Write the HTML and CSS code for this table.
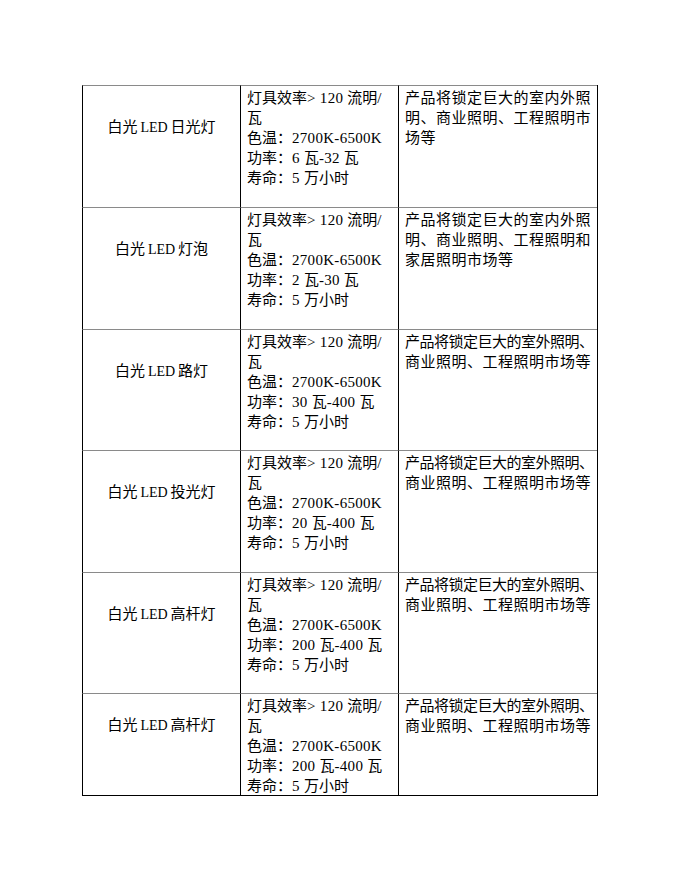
FILE: index.html
```html
<!DOCTYPE html>
<html lang="zh-CN">
<head>
<meta charset="utf-8">
<title>白光LED产品</title>
<link rel="stylesheet" href="styles.css">
</head>
<body>
<div class="spec-table">
  <div class="cell name"><span>白光<span class="lat">LED</span>日光灯</span></div>
  <div class="cell spec">
    <div class="ln">灯具效率<span class="lat">&gt; 120 </span>流明<span class="lat">/</span></div>
    <div class="ln">瓦</div>
    <div class="ln">色温：<span class="lat">2700K-6500K</span></div>
    <div class="ln">功率：<span class="lat">6 </span>瓦<span class="lat">-32 </span>瓦</div>
    <div class="ln">寿命：<span class="lat">5 </span>万小时</div>
  </div>
  <div class="cell market">
    <div class="ln">产品将锁定巨大的室内外照</div>
    <div class="ln">明、商业照明、工程照明市</div>
    <div class="ln">场等</div>
  </div>

  <div class="cell name"><span>白光<span class="lat">LED</span>灯泡</span></div>
  <div class="cell spec">
    <div class="ln">灯具效率<span class="lat">&gt; 120 </span>流明<span class="lat">/</span></div>
    <div class="ln">瓦</div>
    <div class="ln">色温：<span class="lat">2700K-6500K</span></div>
    <div class="ln">功率：<span class="lat">2 </span>瓦<span class="lat">-30 </span>瓦</div>
    <div class="ln">寿命：<span class="lat">5 </span>万小时</div>
  </div>
  <div class="cell market">
    <div class="ln">产品将锁定巨大的室内外照</div>
    <div class="ln">明、商业照明、工程照明和</div>
    <div class="ln">家居照明市场等</div>
  </div>

  <div class="cell name"><span>白光<span class="lat">LED</span>路灯</span></div>
  <div class="cell spec">
    <div class="ln">灯具效率<span class="lat">&gt; 120 </span>流明<span class="lat">/</span></div>
    <div class="ln">瓦</div>
    <div class="ln">色温：<span class="lat">2700K-6500K</span></div>
    <div class="ln">功率：<span class="lat">30 </span>瓦<span class="lat">-400 </span>瓦</div>
    <div class="ln">寿命：<span class="lat">5 </span>万小时</div>
  </div>
  <div class="cell market">
    <div class="ln tight">产品将锁定巨大的室外照明、</div>
    <div class="ln">商业照明、工程照明市场等</div>
  </div>

  <div class="cell name"><span>白光<span class="lat">LED</span>投光灯</span></div>
  <div class="cell spec">
    <div class="ln">灯具效率<span class="lat">&gt; 120 </span>流明<span class="lat">/</span></div>
    <div class="ln">瓦</div>
    <div class="ln">色温：<span class="lat">2700K-6500K</span></div>
    <div class="ln">功率：<span class="lat">20 </span>瓦<span class="lat">-400 </span>瓦</div>
    <div class="ln">寿命：<span class="lat">5 </span>万小时</div>
  </div>
  <div class="cell market">
    <div class="ln tight">产品将锁定巨大的室外照明、</div>
    <div class="ln">商业照明、工程照明市场等</div>
  </div>

  <div class="cell name"><span>白光<span class="lat">LED</span>高杆灯</span></div>
  <div class="cell spec">
    <div class="ln">灯具效率<span class="lat">&gt; 120 </span>流明<span class="lat">/</span></div>
    <div class="ln">瓦</div>
    <div class="ln">色温：<span class="lat">2700K-6500K</span></div>
    <div class="ln">功率：<span class="lat">200 </span>瓦<span class="lat">-400 </span>瓦</div>
    <div class="ln">寿命：<span class="lat">5 </span>万小时</div>
  </div>
  <div class="cell market">
    <div class="ln tight">产品将锁定巨大的室外照明、</div>
    <div class="ln">商业照明、工程照明市场等</div>
  </div>

  <div class="cell name"><span>白光<span class="lat">LED</span>高杆灯</span></div>
  <div class="cell spec">
    <div class="ln">灯具效率<span class="lat">&gt; 120 </span>流明<span class="lat">/</span></div>
    <div class="ln">瓦</div>
    <div class="ln">色温：<span class="lat">2700K-6500K</span></div>
    <div class="ln">功率：<span class="lat">200 </span>瓦<span class="lat">-400 </span>瓦</div>
    <div class="ln">寿命：<span class="lat">5 </span>万小时</div>
  </div>
  <div class="cell market">
    <div class="ln tight">产品将锁定巨大的室外照明、</div>
    <div class="ln">商业照明、工程照明市场等</div>
  </div>
</div>
</body>
</html>
```

FILE: styles.css
```css
html, body {
  margin: 0;
  padding: 0;
  background: #fff;
}

body {
  font-family: "Noto Sans CJK SC", "Liberation Serif", sans-serif;
  font-size: 15px;
  line-height: 20px;
  color: #000;
}

.spec-table {
  display: grid;
  grid-template-columns: 158px 158px 199px;
  grid-template-rows: 122px 122px 121px 122px 121px auto;
  width: max-content;
  margin: 85px 0 0 82px;
  border-right: 1px solid #000;
  border-bottom: 1px solid #000;
}

.cell {
  box-sizing: border-box;
  border-left: 1px solid #000;
  border-top: 1px solid #8a8a8a;
  padding: 1px 0 0 6px;
  white-space: nowrap;
}

.ln {
  height: 20px;
  line-height: 20px;
}

.name {
  display: flex;
  align-items: center;
  justify-content: center;
  padding: 1px 0 42px 0;
  line-height: 20px;
}

.lat {
  font-family: "Liberation Serif", serif;
  line-height: 1;
}

.name .lat {
  margin: 0 3px;
  font-size: 14px;
}

.spec .lat {
  font-size: 15px;
  letter-spacing: 0.3px;
}

.market .ln {
  letter-spacing: 0.5px;
}

.market .ln.tight {
  letter-spacing: -0.5px;
}
```
